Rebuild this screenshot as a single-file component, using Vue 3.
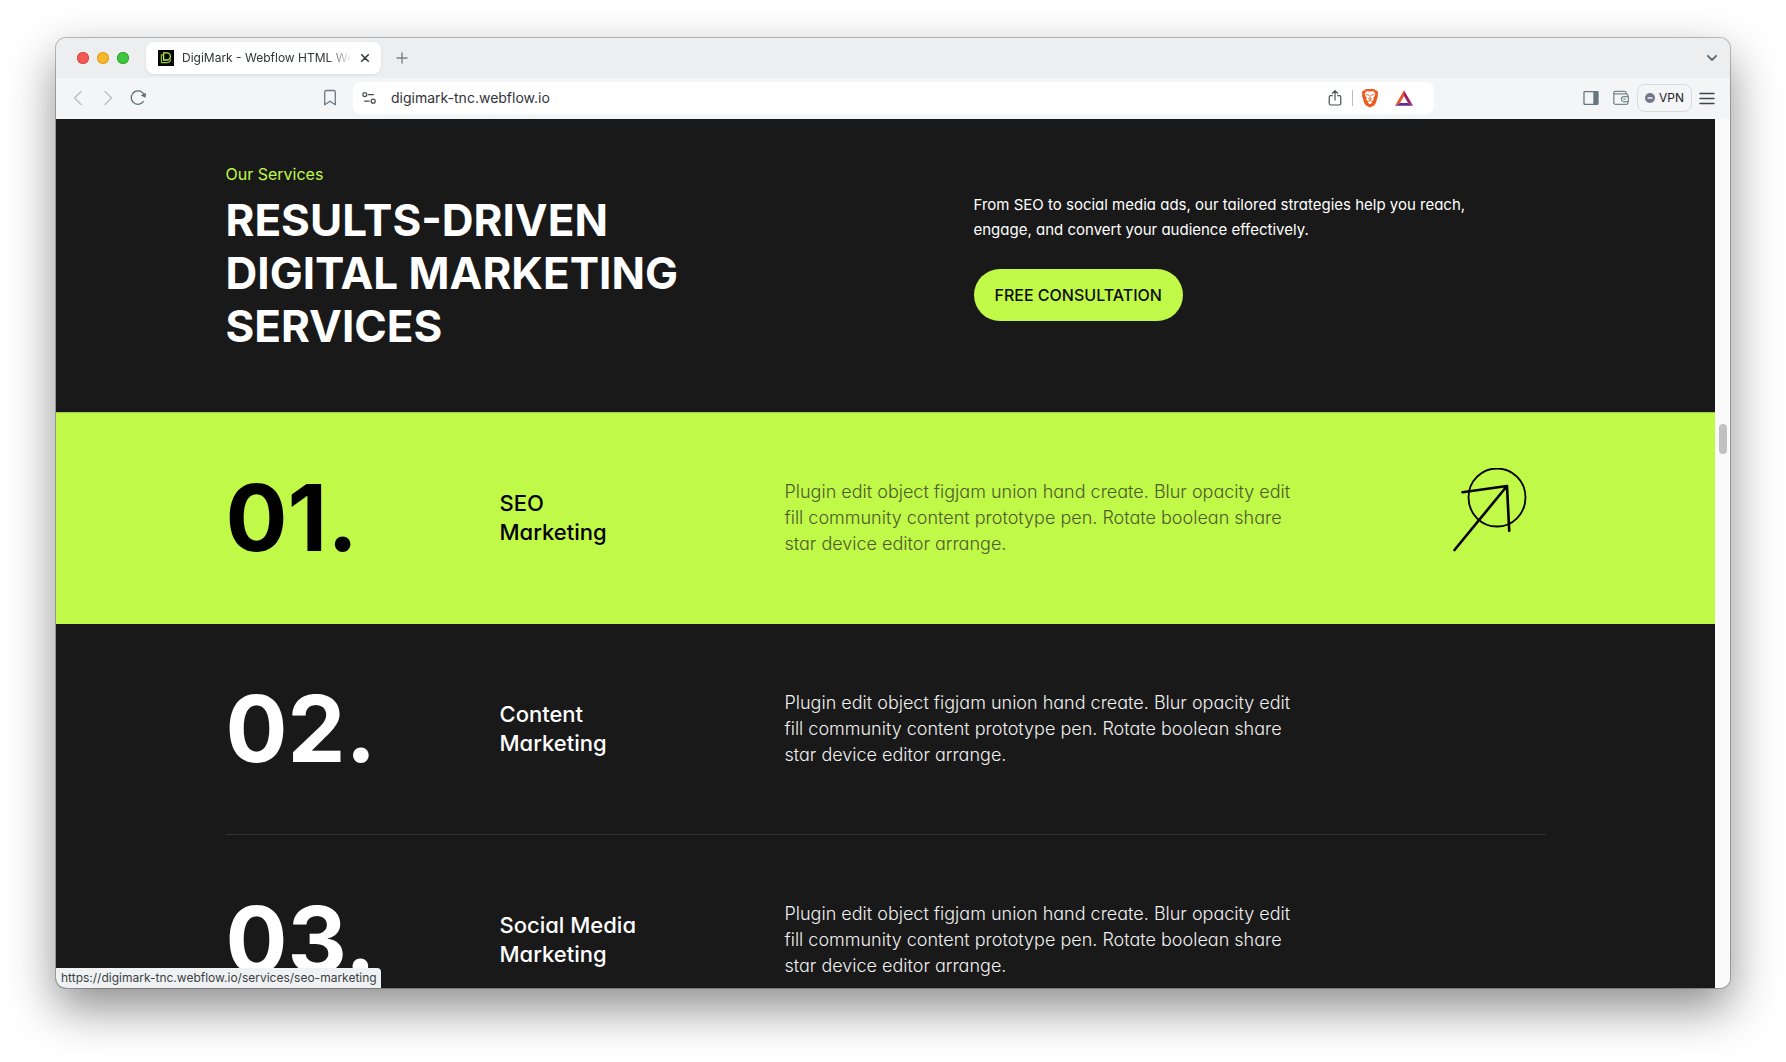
<template>
  <div class="desktop">
    <div class="window">
      <header class="tab-strip">
        <div class="traffic-lights">
          <button type="button" class="light red" aria-label="Close window"></button>
          <button type="button" class="light yellow" aria-label="Minimize window"></button>
          <button type="button" class="light green" aria-label="Zoom window"></button>
        </div>
        <div class="tab">
          <svg class="favicon" viewBox="0 0 16 16" width="16" height="16" fill="none">
            <rect width="16" height="16" fill="#050505" />
            <path d="M5.6 2.8h3.2a3.6 3.6 0 0 1 0 7.2H5.6z" stroke="#b9f03f" stroke-width="1.3" />
            <path d="M5.6 4.8H3.4v7.8h5.4c2 0 3.6-1 3.9-3.2" stroke="#93c22f" stroke-width="1.2" />
          </svg>
          <span class="tab-title">DigiMark - Webflow HTML We</span>
          <button type="button" class="icon-btn" aria-label="Close tab">
            <svg viewBox="0 0 16 16" width="16" height="16" fill="none" stroke="#3a3f44" stroke-width="1.6" stroke-linecap="round">
              <path d="M4.7 4.7l6.6 6.6M11.3 4.7l-6.6 6.6" />
            </svg>
          </button>
        </div>
        <button type="button" class="icon-btn new-tab" aria-label="New tab">
          <svg viewBox="0 0 16 16" width="16" height="16" fill="none" stroke="#7b8084" stroke-width="1.4" stroke-linecap="round">
            <path d="M8 3v10M3 8h10" />
          </svg>
        </button>
        <button type="button" class="icon-btn tab-search" aria-label="Search tabs">
          <svg viewBox="0 0 16 16" width="16" height="16" fill="none" stroke="#5b6b75" stroke-width="1.8" stroke-linecap="round" stroke-linejoin="round">
            <path d="M3.8 5.8L8 10l4.2-4.2" />
          </svg>
        </button>
      </header>

      <div class="toolbar">
        <div class="nav-group">
          <button type="button" class="icon-btn" aria-label="Back">
            <svg viewBox="0 0 18 18" width="18" height="18" fill="none" stroke="#b9bfc4" stroke-width="1.3" stroke-linecap="round" stroke-linejoin="round">
              <path d="M12 2.5L5.5 9l6.5 6.5" />
            </svg>
          </button>
          <button type="button" class="icon-btn" aria-label="Forward">
            <svg viewBox="0 0 18 18" width="18" height="18" fill="none" stroke="#b9bfc4" stroke-width="1.3" stroke-linecap="round" stroke-linejoin="round">
              <path d="M6 2.5L12.5 9 6 15.5" />
            </svg>
          </button>
          <button type="button" class="icon-btn" aria-label="Reload">
            <svg viewBox="0 0 18 18" width="18" height="18" fill="none">
              <path d="M14.3 12.6A6.7 6.7 0 1 1 15.2 6.2" stroke="#5b6b75" stroke-width="1.3" stroke-linecap="round" />
              <path d="M11.8 6.4l4.8 2.4.3-5z" fill="#5b6b75" />
            </svg>
          </button>
          <button type="button" class="icon-btn bookmark" aria-label="Bookmark this page">
            <svg viewBox="0 0 18 18" width="18" height="18" fill="none" stroke="#6b7a84" stroke-width="1.3" stroke-linejoin="round">
              <path d="M3.7 3a1.5 1.5 0 0 1 1.5-1.5h7.6A1.5 1.5 0 0 1 14.3 3v12.8L9 12.2l-5.3 3.6z" />
            </svg>
          </button>
        </div>

        <div class="address-bar">
          <button type="button" class="icon-btn" aria-label="Site information">
            <svg viewBox="0 0 16 16" width="16" height="16" fill="none" stroke="#44494d" stroke-width="1.2" stroke-linecap="round">
              <circle cx="3.8" cy="4.6" r="2" />
              <path d="M7.5 4.6h5" />
              <circle cx="12.2" cy="11.2" r="2" />
              <path d="M3.6 11.2h4.6" />
            </svg>
          </button>
          <input v-model="url" class="url" type="text" aria-label="Address" spellcheck="false" />
          <button type="button" class="icon-btn" aria-label="Share">
            <svg viewBox="0 0 18 18" width="18" height="18" fill="none" stroke="#4b4f53" stroke-width="1.2" stroke-linecap="round" stroke-linejoin="round">
              <path d="M9 11V1.8M6.2 4.4L9 1.7l2.8 2.7M6.2 6.7H4.8a1.6 1.6 0 0 0-1.6 1.6v5.9a1.8 1.8 0 0 0 1.8 1.8h8a1.8 1.8 0 0 0 1.8-1.8V8.3a1.6 1.6 0 0 0-1.6-1.6h-1.4" />
            </svg>
          </button>
          <span class="divider"></span>
          <button type="button" class="icon-btn" aria-label="Brave Shields">
            <svg viewBox="0 0 18 20" width="18" height="20">
              <path d="M5 1h8l1.6 1.5 1.3-.1 1.3 2-.6 1.8.4 1.6-2.2 7.3c-.3 1-1 1.7-1.8 2.3L9 19.600l-4-2.200c-.8-.6-1.5-1.3-1.8-2.3L1 7.8l.4-1.6-.6-1.8 1.3-2 1.3.1z" fill="#ec5a1c" />
              <path d="M9 3.6l3.5-.4 1.8 2.6-.5 1.9-1.5 2.3.5 1.7-2 1.5.5 1.6L9 16.3l-2.3-1.5.5-1.6-2-1.5.5-1.7-1.5-2.3-.5-1.9 1.8-2.6z" fill="#fff" />
              <path d="M5.2 6.5l2.5.7M12.8 6.5l-2.5.7M9 7.5v3.4M7.5 10.4L9 11.5l1.5-1.1M7.4 13.2L9 12.5l1.6.7" fill="none" stroke="#ec5a1c" stroke-width="0.9" stroke-linecap="round" />
            </svg>
          </button>
          <button type="button" class="icon-btn rewards" aria-label="Brave Rewards">
            <svg viewBox="0 0 18 18" width="18" height="18">
              <path d="M9 1.3L0 16.7l5-2.7L9 7z" fill="#f0512b" />
              <path d="M9 1.3l9 15.4-5-2.7L9 7z" fill="#9e1f63" />
              <path d="M0 16.7h18L13 14H5z" fill="#662d91" />
            </svg>
          </button>
        </div>

        <div class="tool-group">
          <button type="button" class="icon-btn" aria-label="Sidebar">
            <svg viewBox="0 0 18 18" width="18" height="18" fill="none">
              <rect x="2" y="2.6" width="14" height="12.8" rx="0.8" stroke="#657680" stroke-width="1.3" />
              <path d="M11.3 2.6h4.7v12.8h-4.7z" fill="#657680" />
            </svg>
          </button>
          <button type="button" class="icon-btn" aria-label="Wallet">
            <svg viewBox="0 0 18 18" width="18" height="18" fill="none" stroke="#7b8a8e" stroke-width="1.3" stroke-linejoin="round">
              <path d="M15.8 7.6V6.3a1.5 1.5 0 0 0-1.5-1.5H3.3A1.5 1.5 0 0 1 1.8 3.6c0-.7.6-1.2 1.4-1.2h9.4a1.5 1.5 0 0 1 1.5 1.5v.9M1.8 3.6v10.1a1.7 1.7 0 0 0 1.7 1.7h10.8a1.5 1.5 0 0 0 1.5-1.5v-1.3" />
              <path d="M16.4 7.6h-4.5a2.5 2.5 0 0 0 0 5h4.5z" />
              <path d="M11.8 10.1h1.4" stroke-linecap="round" />
            </svg>
          </button>
          <button type="button" class="vpn">
            <svg viewBox="0 0 10 10" width="10" height="10">
              <circle cx="5" cy="5" r="5" fill="#74748c" />
              <path d="M2.5 5h5" stroke="#f3f5f7" stroke-width="1.4" />
            </svg>
            VPN
          </button>
          <button type="button" class="icon-btn" aria-label="Menu">
            <svg viewBox="0 0 18 18" width="18" height="18" fill="none" stroke="#3f464b" stroke-width="1.4" stroke-linecap="round">
              <path d="M2 4.5h14M2 9.5h14M2 14.5h14" />
            </svg>
          </button>
        </div>
      </div>

      <div class="viewport">
        <main class="page">
          <section class="container intro">
            <div>
              <p class="eyebrow">Our Services</p>
              <h1 class="headline">Results-Driven<br />Digital Marketing<br />Services</h1>
            </div>
            <div class="pitch">
              <p class="lead">From SEO to social media ads, our tailored strategies help you reach,<br />engage, and convert your audience effectively.</p>
              <a href="#" class="cta">Free Consultation</a>
            </div>
          </section>

          <section
            v-for="service in services"
            :key="service.number"
            class="service"
            :class="{ 'is-active': service.number === activeService }"
          >
            <div class="container service-row">
              <span class="service-number">{{ service.number }}.</span>
              <h2 class="service-title">{{ service.topic }}<br />Marketing</h2>
              <p class="service-text">
                Plugin edit object figjam union hand create. Blur opacity edit<br />
                fill community content prototype pen. Rotate boolean share<br />
                star device editor arrange.
              </p>
              <a v-if="service.number === activeService" href="#" class="service-link" aria-label="Open service">
                <svg viewBox="0 0 76 84" width="76" height="84" fill="none" stroke="#000" stroke-linecap="round" stroke-linejoin="round">
                  <ellipse cx="45" cy="29.5" rx="28.5" ry="29" stroke-width="1.8" />
                  <path d="M2.5 82L55 18M10.5 24.3L55 18l2.2 44.6" stroke-width="2.6" />
                </svg>
              </a>
            </div>
          </section>
        </main>
        <div class="scrollbar">
          <div class="thumb"></div>
        </div>
        <div class="status">https://digimark-tnc.webflow.io/services/seo-marketing</div>
      </div>
    </div>
  </div>
</template>

<script setup>
import { ref } from 'vue'

const url = ref('digimark-tnc.webflow.io')
const activeService = ref('01')

const services = [
  { number: '01', topic: 'SEO' },
  { number: '02', topic: 'Content' },
  { number: '03', topic: 'Social Media' }
]
</script>

<style>
body {
  background: #fff;
}
</style>

<style scoped>
.desktop {
  box-sizing: border-box;
  height: 100vh;
  padding: 38px 56px 74px;
  overflow: hidden;
  font-family: Inter, "Liberation Sans", sans-serif;
}

.window {
  display: flex;
  flex-direction: column;
  height: 100%;
  border-radius: 10px;
  overflow: hidden;
  background: #f3f5f7;
  box-shadow: 0 0 0 1px rgba(0, 0, 0, 0.24), 0 20px 48px rgba(0, 0, 0, 0.46);
}

button {
  padding: 0;
  border: none;
  background: none;
  font: inherit;
}

.icon-btn {
  display: flex;
  flex: none;
}

/* Tabs */
.tab-strip {
  display: flex;
  flex: none;
  align-items: center;
  box-sizing: border-box;
  height: 40px;
  padding: 0 10px 0 21px;
  background: #eceef0;
}

.traffic-lights {
  display: flex;
  gap: 8px;
  margin-right: 17px;
}

.light {
  width: 12px;
  height: 12px;
  border-radius: 50%;
}

.light.red {
  background: #f25a56;
  box-shadow: inset 0 0 0 1px #dd4744;
}

.light.yellow {
  background: #f6b72c;
  box-shadow: inset 0 0 0 1px #dda023;
}

.light.green {
  background: #3fc53f;
  box-shadow: inset 0 0 0 1px #2eab2f;
}

.tab {
  display: flex;
  align-items: center;
  box-sizing: border-box;
  width: 235px;
  height: 32px;
  padding: 0 8px 0 12px;
  border-radius: 8px;
  background: #fff;
  box-shadow: 0 1px 3px rgba(0, 0, 0, 0.08);
}

.favicon {
  flex: none;
  margin-right: 8px;
}

.tab-title {
  flex: 1;
  margin-right: 6px;
  overflow: hidden;
  font-size: 12px;
  line-height: 16px;
  white-space: nowrap;
  color: #303438;
  -webkit-mask-image: linear-gradient(to right, #000 86%, transparent);
  mask-image: linear-gradient(to right, #000 86%, transparent);
}

.new-tab {
  margin-left: 13px;
}

.tab-search {
  margin-left: auto;
}

/* Toolbar */
.toolbar {
  display: flex;
  flex: none;
  align-items: center;
  box-sizing: border-box;
  height: 41px;
  padding: 0 14px 2px 13px;
}

.nav-group,
.tool-group {
  display: flex;
  flex: none;
  align-items: center;
  gap: 12px;
  width: 284px;
}

.bookmark {
  margin: 0 14px 0 auto;
}

.address-bar {
  display: flex;
  flex: 1;
  align-items: center;
  gap: 8px;
  height: 32px;
  padding: 0 21px 0 8px;
  border-radius: 8px;
  background: #fff;
}

.url {
  flex: 1;
  min-width: 0;
  padding: 0 6px;
  border: none;
  outline: none;
  background: none;
  font-family: inherit;
  font-size: 14px;
  line-height: 20px;
  color: #303438;
}

.divider {
  width: 1px;
  height: 16px;
  background: #b8bcc0;
}

.rewards {
  margin-left: 8px;
}

.tool-group {
  justify-content: flex-end;
  width: 282px;
}

.vpn {
  display: flex;
  align-items: center;
  justify-content: center;
  gap: 4px;
  box-sizing: border-box;
  width: 55px;
  height: 28px;
  margin: 0 -6px 0 -5px;
  border: 1px solid #d8dbde;
  border-radius: 8px;
  font-size: 12px;
  color: #1c1f22;
}

/* Page */
.viewport {
  position: relative;
  display: flex;
  flex: 1;
  min-height: 0;
}

.page {
  flex: 1;
  overflow: hidden;
  background: #191919;
  color: #fff;
  font-feature-settings: "cv11";
}

.container {
  box-sizing: border-box;
  max-width: 1320px;
  margin: 0 auto;
}

.intro {
  display: grid;
  grid-template-columns: 748fr 572fr;
  align-items: center;
  padding: 43px 0 59px;
}

.eyebrow {
  margin: 0 0 8px;
  font-size: 16px;
  line-height: 24px;
  color: #c0f948;
}

.headline {
  margin: 0;
  font-size: 44px;
  font-weight: 700;
  line-height: 53px;
  text-transform: uppercase;
}

.pitch {
  display: flex;
  flex-direction: column;
  align-items: flex-start;
  padding-bottom: 2px;
}

.lead {
  margin: 0 0 27px;
  font-size: 15px;
  line-height: 25px;
  white-space: nowrap;
}

.cta {
  display: inline-flex;
  align-items: center;
  height: 52px;
  padding: 0 21px;
  border-radius: 26px;
  background: #c0f948;
  font-size: 16px;
  font-weight: 500;
  text-decoration: none;
  text-transform: uppercase;
  color: #0c0c0c;
}

.service-row {
  display: grid;
  grid-template-columns: 274px 285px 1fr 112px;
  align-items: center;
  padding: 55px 0;
  border-bottom: 1px solid #333;
}

.service-number {
  font-size: 92px;
  font-weight: 700;
  line-height: 100px;
}

.service-title {
  margin: 0;
  font-size: 22px;
  font-weight: 500;
  line-height: 29px;
}

.service-text {
  margin: 0;
  font-size: 18px;
  font-weight: 300;
  line-height: 26px;
  white-space: nowrap;
  color: #f0f0f0;
}

.service-link {
  display: flex;
  align-self: start;
  justify-content: center;
}

.is-active {
  border-top: 1px solid #a2c850;
  background: #c0f948;
  color: #000;
}

.is-active .service-row {
  border-color: transparent;
}

.is-active .service-text {
  color: #4c5c2c;
}

.scrollbar {
  flex: none;
  box-sizing: border-box;
  width: 15px;
  padding: 305px 3px 0 4px;
  background: #fafafa;
}

.thumb {
  height: 30px;
  border-radius: 4px;
  background: #c1c1c1;
}

.status {
  position: absolute;
  bottom: 0;
  left: 0;
  padding: 0 4px 0 5px;
  border-radius: 0 4px 0 0;
  background: #eff1f3;
  font-size: 12px;
  line-height: 20px;
  color: #3b3f43;
}
</style>
